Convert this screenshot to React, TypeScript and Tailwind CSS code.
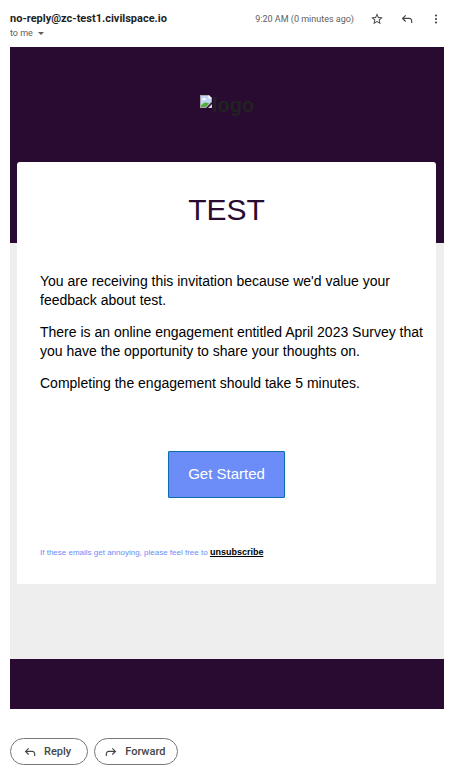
interface IconProps {
  className?: string;
}

function StarIcon({ className }: IconProps) {
  return (
    <svg viewBox="0 0 24 24" className={className} fill="currentColor" aria-hidden="true">
      <path d="M22 9.24l-7.19-.62L12 2 9.19 8.63 2 9.24l5.46 4.73L5.82 21 12 17.27 18.18 21l-1.63-7.03L22 9.24zM12 15.4l-3.76 2.27 1-4.28-3.32-2.88 4.38-.38L12 6.1l1.71 4.04 4.38.38-3.32 2.88 1 4.28L12 15.4z" />
    </svg>
  );
}

function ReplyIcon({ className }: IconProps) {
  return (
    <svg viewBox="0 -960 960 960" className={className} fill="currentColor" aria-hidden="true">
      <path d="M760-200v-160q0-50-35-85t-85-35H273l144 144-57 56-240-240 240-240 57 56-144 144h367q83 0 141.500 58.500T840-360v160h-80Z" />
    </svg>
  );
}

function MoreIcon({ className }: IconProps) {
  return (
    <svg viewBox="0 0 24 24" className={className} fill="currentColor" aria-hidden="true">
      <circle cx="12" cy="5" r="2.2" />
      <circle cx="12" cy="12" r="2.2" />
      <circle cx="12" cy="19" r="2.2" />
    </svg>
  );
}

function BrokenImageIcon({ className }: IconProps) {
  return (
    <svg viewBox="0 0 12 13" className={className} aria-hidden="true">
      <path d="M0 0h9l3 3v4L6 13H0z" fill="#a9a9ad" />
      <path d="M1 1h7.5L11 3.5v3L5.5 12H1z" fill="#c5d5f5" />
      <path d="M2 4.5c0-1 1-1.3 1.5-1 .5-1 2-.8 2 .3.8 0 .8 1.2 0 1.200H2.800c-.5 0-.8-.2-.8-.5z" fill="#fff" />
      <path d="M1 12v-1.500C2.500 8.500 4.500 7 6.500 7.500L9 8.500 5.500 12z" fill="#4fae3c" />
      <path d="M8.500 0v3.500H12z" fill="#fff" />
      <path d="M12 9v4H8z" fill="#d5d5d8" />
    </svg>
  );
}

function MessageHeader() {
  return (
    <header className="flex items-start justify-between pt-3 pr-[14px] pl-[10px] font-[Roboto,'Liberation_Sans',sans-serif]">
      <div>
        <h1 className="text-[11px] leading-[13px] font-bold text-[#1f1f1f]">no-reply@zc-test1.civilspace.io</h1>
        <button className="mt-[2px] flex items-center gap-[5px] text-[9px] leading-[13px] text-[#5e5e5e]">
          to me
          <span className="border-x-[3px] border-t-[3px] border-x-transparent border-t-[#5e5e5e]" />
        </button>
      </div>
      <div className="flex items-center text-[#444746]">
        <time className="mr-4 text-[9px] leading-[13px] text-[#5e5e5e]">9:20 AM (0 minutes ago)</time>
        <button aria-label="Star" className="mr-4">
          <StarIcon className="size-[14px]" />
        </button>
        <button aria-label="Reply" className="mr-4">
          <ReplyIcon className="size-[14px]" />
        </button>
        <button aria-label="More">
          <MoreIcon className="size-3" />
        </button>
      </div>
    </header>
  );
}

function EmailBody() {
  return (
    <main className="mt-[7px] mr-3 ml-[10px] bg-[#eeeeee] font-['Liberation_Sans',Arial,sans-serif]">
      <div className="flex h-[196px] items-start justify-center bg-[#290a31] pt-12">
        <div role="img" aria-label="logo" className="flex items-start">
          <BrokenImageIcon className="h-[13px] w-3" />
          <span className="text-xl leading-5 font-bold text-[#222222]">logo</span>
        </div>
      </div>

      <section className="relative -mt-[81px] mr-2 ml-[7px] rounded-t-[3px] bg-white px-[23px] pt-8 pb-[25px]">
        <h2 className="text-center text-[30px] leading-8 text-[#290a31]">TEST</h2>
        <div className="-mr-4 mt-[46px] space-y-[13px] text-[14px] leading-[19px] text-black">
          <p>You are receiving this invitation because we'd value your feedback about test.</p>
          <p>
            There is an online engagement entitled April 2023 Survey that you have the opportunity to share your
            thoughts on.
          </p>
          <p>Completing the engagement should take 5 minutes.</p>
        </div>
        <div className="mt-[58px] flex justify-center">
          <a
            href="#start"
            className="rounded-[1px] border border-[#0b6fae] bg-[#6c8df8] px-[19px] pt-3 pb-[14px] text-[15px] leading-[19px] text-white"
          >
            Get Started
          </a>
        </div>
        <p className="mt-12 text-[8px] leading-3 text-[#6c8df8]">
          If these emails get annoying, please feel free to{' '}
          <a href="#unsubscribe" className="text-[9px] font-bold text-black underline">
            unsubscribe
          </a>
        </p>
      </section>

      <div className="mt-[75px] h-[50px] bg-[#290a31]" />
    </main>
  );
}

function MessageActions() {
  return (
    <footer className="mt-[29px] flex gap-[6px] px-[10px] font-[Roboto,'Liberation_Sans',sans-serif] text-[11px] leading-[25px] font-medium text-[#444746]">
      <button className="flex items-center gap-[7px] rounded-full border border-[#747775] pr-4 pl-3">
        <ReplyIcon className="size-[14px]" />
        Reply
      </button>
      <button className="flex items-center gap-[7px] rounded-full border border-[#747775] pr-3 pl-[9px]">
        <ReplyIcon className="size-[14px] -scale-x-100" />
        Forward
      </button>
    </footer>
  );
}

export default function App() {
  return (
    <div className="min-h-screen bg-white pb-[14px]">
      <MessageHeader />
      <EmailBody />
      <MessageActions />
    </div>
  );
}
